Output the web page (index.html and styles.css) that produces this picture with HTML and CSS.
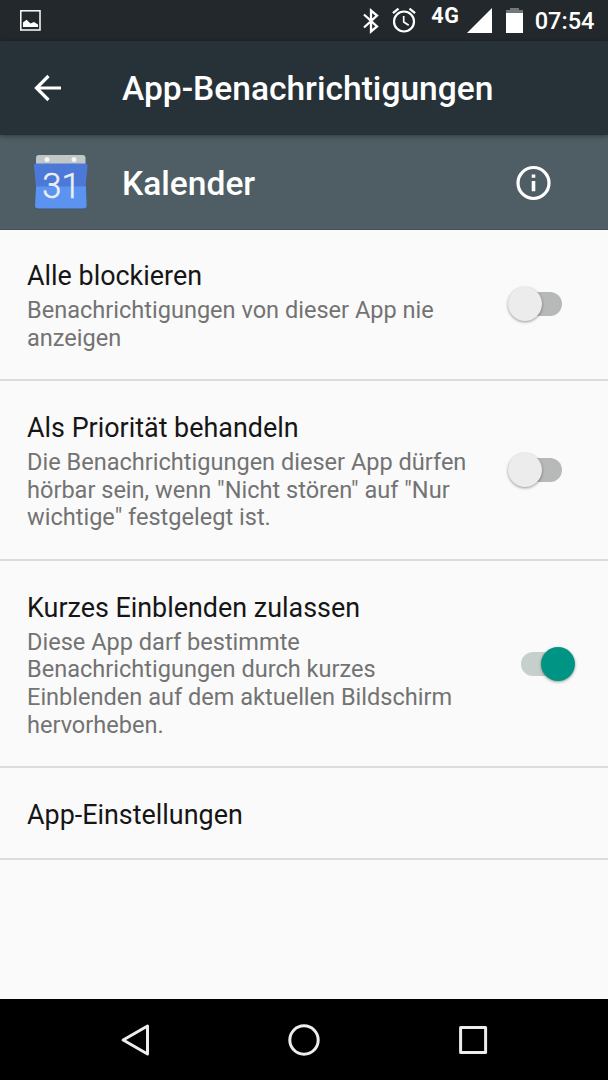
FILE: index.html
```html
<!DOCTYPE html>
<html lang="de">
<head>
    <meta charset="UTF-8">
    <meta name="viewport" content="width=device-width, initial-scale=1.0">
    <title>App-Benachrichtigungen</title>
    <link rel="stylesheet" href="styles.css">
</head>
<body>

<div class="screen">
    <div class="status-bar">
        <svg class="icon-image" width="21" height="21" viewBox="0 0 21 21">
            <rect x="0.8" y="0.8" width="19.2" height="19.2" fill="none" stroke="#fff" stroke-width="1.5"/>
            <path d="M3 17v-4.500l3.500-2.700 4 3.700 3.500-1.500 4 2.500v2.500z" fill="#fff"/>
        </svg>
        <div class="status-icons">
            <svg class="icon-bluetooth" width="16" height="26" viewBox="0 0 16 26">
                <path d="M1 6.500L14 18.500L8 23.500V2.500L14 7.500L1 19.500" fill="none" stroke="#fff" stroke-width="2.300"/>
            </svg>
            <svg class="icon-alarm" width="24" height="26" viewBox="0 0 24 26">
                <circle cx="12" cy="14.500" r="10" fill="none" stroke="#fff" stroke-width="2.200"/>
                <path d="M11.700 9v6l5 3.200" fill="none" stroke="#fff" stroke-width="1.700"/>
                <path d="M0.900 6.200L6.500 1.600M23.100 6.200L17.500 1.600" stroke="#fff" stroke-width="2.200"/>
            </svg>
            <span class="network">4G</span>
            <svg class="icon-signal" width="25" height="25" viewBox="0 0 25 25">
                <path d="M25 0v25H0z" fill="#fff"/>
            </svg>
            <svg class="icon-battery" width="17" height="25" viewBox="0 0 17 25">
                <path d="M4 0h9v2h4v4H0V2h4z" fill="#73787b"/>
                <rect y="5" width="17" height="20" fill="#fff"/>
            </svg>
            <span class="clock">07:54</span>
        </div>
    </div>

    <div class="toolbar">
        <svg class="icon-back" width="28" height="28" viewBox="0 0 28 28">
            <path d="M14.500 2L2.500 14L14.500 26M2.500 14H27" fill="none" stroke="#fff" stroke-width="3.200"/>
        </svg>
        <h1>App-Benachrichtigungen</h1>
    </div>

    <div class="app-header">
        <svg class="icon-calendar" width="56" height="57" viewBox="0 0 56 57">
            <rect x="3" y="1" width="49.500" height="14" rx="3" fill="#bfc8c7"/>
            <circle cx="14" cy="5.600" r="2.500" fill="#f2f4f4"/>
            <circle cx="41" cy="5.600" r="2.500" fill="#f2f4f4"/>
            <path d="M2.500 33H53.500V52.500a3 3 0 0 1-3 3H5a3 3 0 0 1-3-3z" fill="#3d5568"/>
            <path d="M3 32H53L53.700 51.500a3 3 0 0 1-3 3H5a3 3 0 0 1-3-3z" fill="#5c93f0"/>
            <path d="M3.500 9.500H52a2.500 2.500 0 0 1 2.500 2.800L52.500 32.500H3L1 12.300A2.500 2.500 0 0 1 3.500 9.500z" fill="#4c78d8"/>
            <text x="28.500" y="44" text-anchor="middle">31</text>
        </svg>
        <h2>Kalender</h2>
        <svg class="icon-info" width="36" height="36" viewBox="0 0 36 36">
            <circle cx="18.500" cy="18" r="15.500" fill="none" stroke="#fff" stroke-width="3.200"/>
            <path d="M16.700 9.400h3.600v3.400h-3.600zM16.700 16h3.600v10.200h-3.600z" fill="#fff"/>
        </svg>
    </div>

    <div class="settings">
        <div class="row">
            <div class="text">
                <h3>Alle blockieren</h3>
                <p>Benachrichtigungen von dieser App nie anzeigen</p>
            </div>
            <div class="switch"></div>
        </div>
        <div class="row">
            <div class="text">
                <h3>Als Priorität behandeln</h3>
                <p>Die Benachrichtigungen dieser App dürfen hörbar sein, wenn "Nicht stören" auf "Nur wichtige" festgelegt ist.</p>
            </div>
            <div class="switch"></div>
        </div>
        <div class="row">
            <div class="text">
                <h3>Kurzes Einblenden zulassen</h3>
                <p>Diese App darf bestimmte Benachrichtigungen durch kurzes Einblenden auf dem aktuellen Bildschirm hervorheben.</p>
            </div>
            <div class="switch on"></div>
        </div>
        <div class="row">
            <div class="text">
                <h3>App-Einstellungen</h3>
            </div>
        </div>
    </div>

    <div class="nav-bar">
        <svg width="32" height="32" viewBox="0 0 32 32">
            <path d="M28.500 2V30L4.200 16z"/>
        </svg>
        <svg width="32" height="32" viewBox="0 0 32 32">
            <circle cx="16" cy="16" r="14.200"/>
        </svg>
        <svg width="32" height="32" viewBox="0 0 32 32">
            <rect x="3.600" y="3.600" width="25" height="25"/>
        </svg>
    </div>
</div>

</body>
</html>
```
FILE: styles.css
```css
* {
    box-sizing: border-box;
}

body {
    margin: 0;
    background: #fafafa;
    font-family: Roboto, sans-serif;
}

h1, h2, h3, p {
    margin: 0;
}

svg {
    display: block;
    flex-shrink: 0;
}

.screen {
    display: flex;
    flex-direction: column;
    width: 608px;
    height: 1080px;
    overflow: hidden;
}

.status-bar {
    display: flex;
    justify-content: space-between;
    height: 41px;
    padding: 0 13.5px 0 20px;
    background: #22282b;
    color: #fff;
}

.icon-image {
    margin-top: 10px;
}

.status-icons {
    display: flex;
    align-items: flex-start;
}

.icon-bluetooth {
    margin: 8px 13px 0 0;
}

.icon-alarm {
    margin: 7px 15px 0 0;
}

.network {
    width: 29px;
    margin: 5px 6.5px 0 0;
    font-size: 21.5px;
    font-weight: 700;
    line-height: 22px;
    letter-spacing: 0.8px;
}

.icon-signal {
    margin: 8px 14px 0 0;
}

.icon-battery {
    margin: 8px 12px 0 0;
}

.clock {
    font-size: 23.6px;
    font-weight: 500;
    line-height: 42px;
}

.toolbar {
    display: flex;
    align-items: center;
    position: relative;
    height: 94px;
    padding-left: 34px;
    background: #263238;
    color: #fff;
    box-shadow: 0 1px 5px rgba(0, 0, 0, 0.4);
}

h1, h2 {
    font-size: 33.55px;
    font-weight: 500;
    line-height: 40px;
}

.toolbar h1 {
    margin: 2px 0 0 60px;
}

.app-header {
    display: flex;
    align-items: center;
    height: 94.5px;
    padding: 2px 57px 0 33px;
    background: #4f5e65;
    border-bottom: 1px solid #43525a;
    color: #fff;
}

.app-header h2 {
    flex: 1;
    margin: 2px 0 0 33px;
}

.icon-calendar text {
    font-size: 34.5px;
    font-weight: 300;
    fill: #eceff1;
    stroke: #eceff1;
    stroke-width: 0.5px;
}

.settings {
    flex: 1;
}

.row {
    display: flex;
    align-items: center;
    justify-content: space-between;
    padding: 30.8px 32.5px 27px 27px;
    border-bottom: 2px solid #dcdcdc;
}

.text {
    width: 453px;
}

.text h3 {
    font-size: 26.9px;
    font-weight: 400;
    line-height: 32px;
    color: #161616;
}

.text p {
    margin-top: 5px;
    font-size: 23.55px;
    line-height: 27.6px;
    color: #737373;
}

.switch {
    position: relative;
    width: 68px;
    height: 34px;
    margin-bottom: 4px;
}

.switch::before {
    content: "";
    position: absolute;
    top: 5px;
    left: 13.5px;
    width: 41px;
    height: 24px;
    border-radius: 12px;
    background: #b7b9b8;
}

.switch::after {
    content: "";
    position: absolute;
    top: 0;
    left: 0;
    width: 34px;
    height: 34px;
    border-radius: 50%;
    background: #ececec;
    box-shadow: 0 1px 3px rgba(0, 0, 0, 0.4);
}

.switch.on::before {
    background: #c7cfcd;
}

.switch.on::after {
    left: 33.5px;
    background: #009485;
}

.nav-bar {
    display: flex;
    align-items: center;
    justify-content: space-between;
    height: 81px;
    padding: 0 119px;
    background: #000;
}

.nav-bar svg {
    fill: none;
    stroke: #eceeee;
    stroke-width: 3;
    stroke-linejoin: round;
}
```
